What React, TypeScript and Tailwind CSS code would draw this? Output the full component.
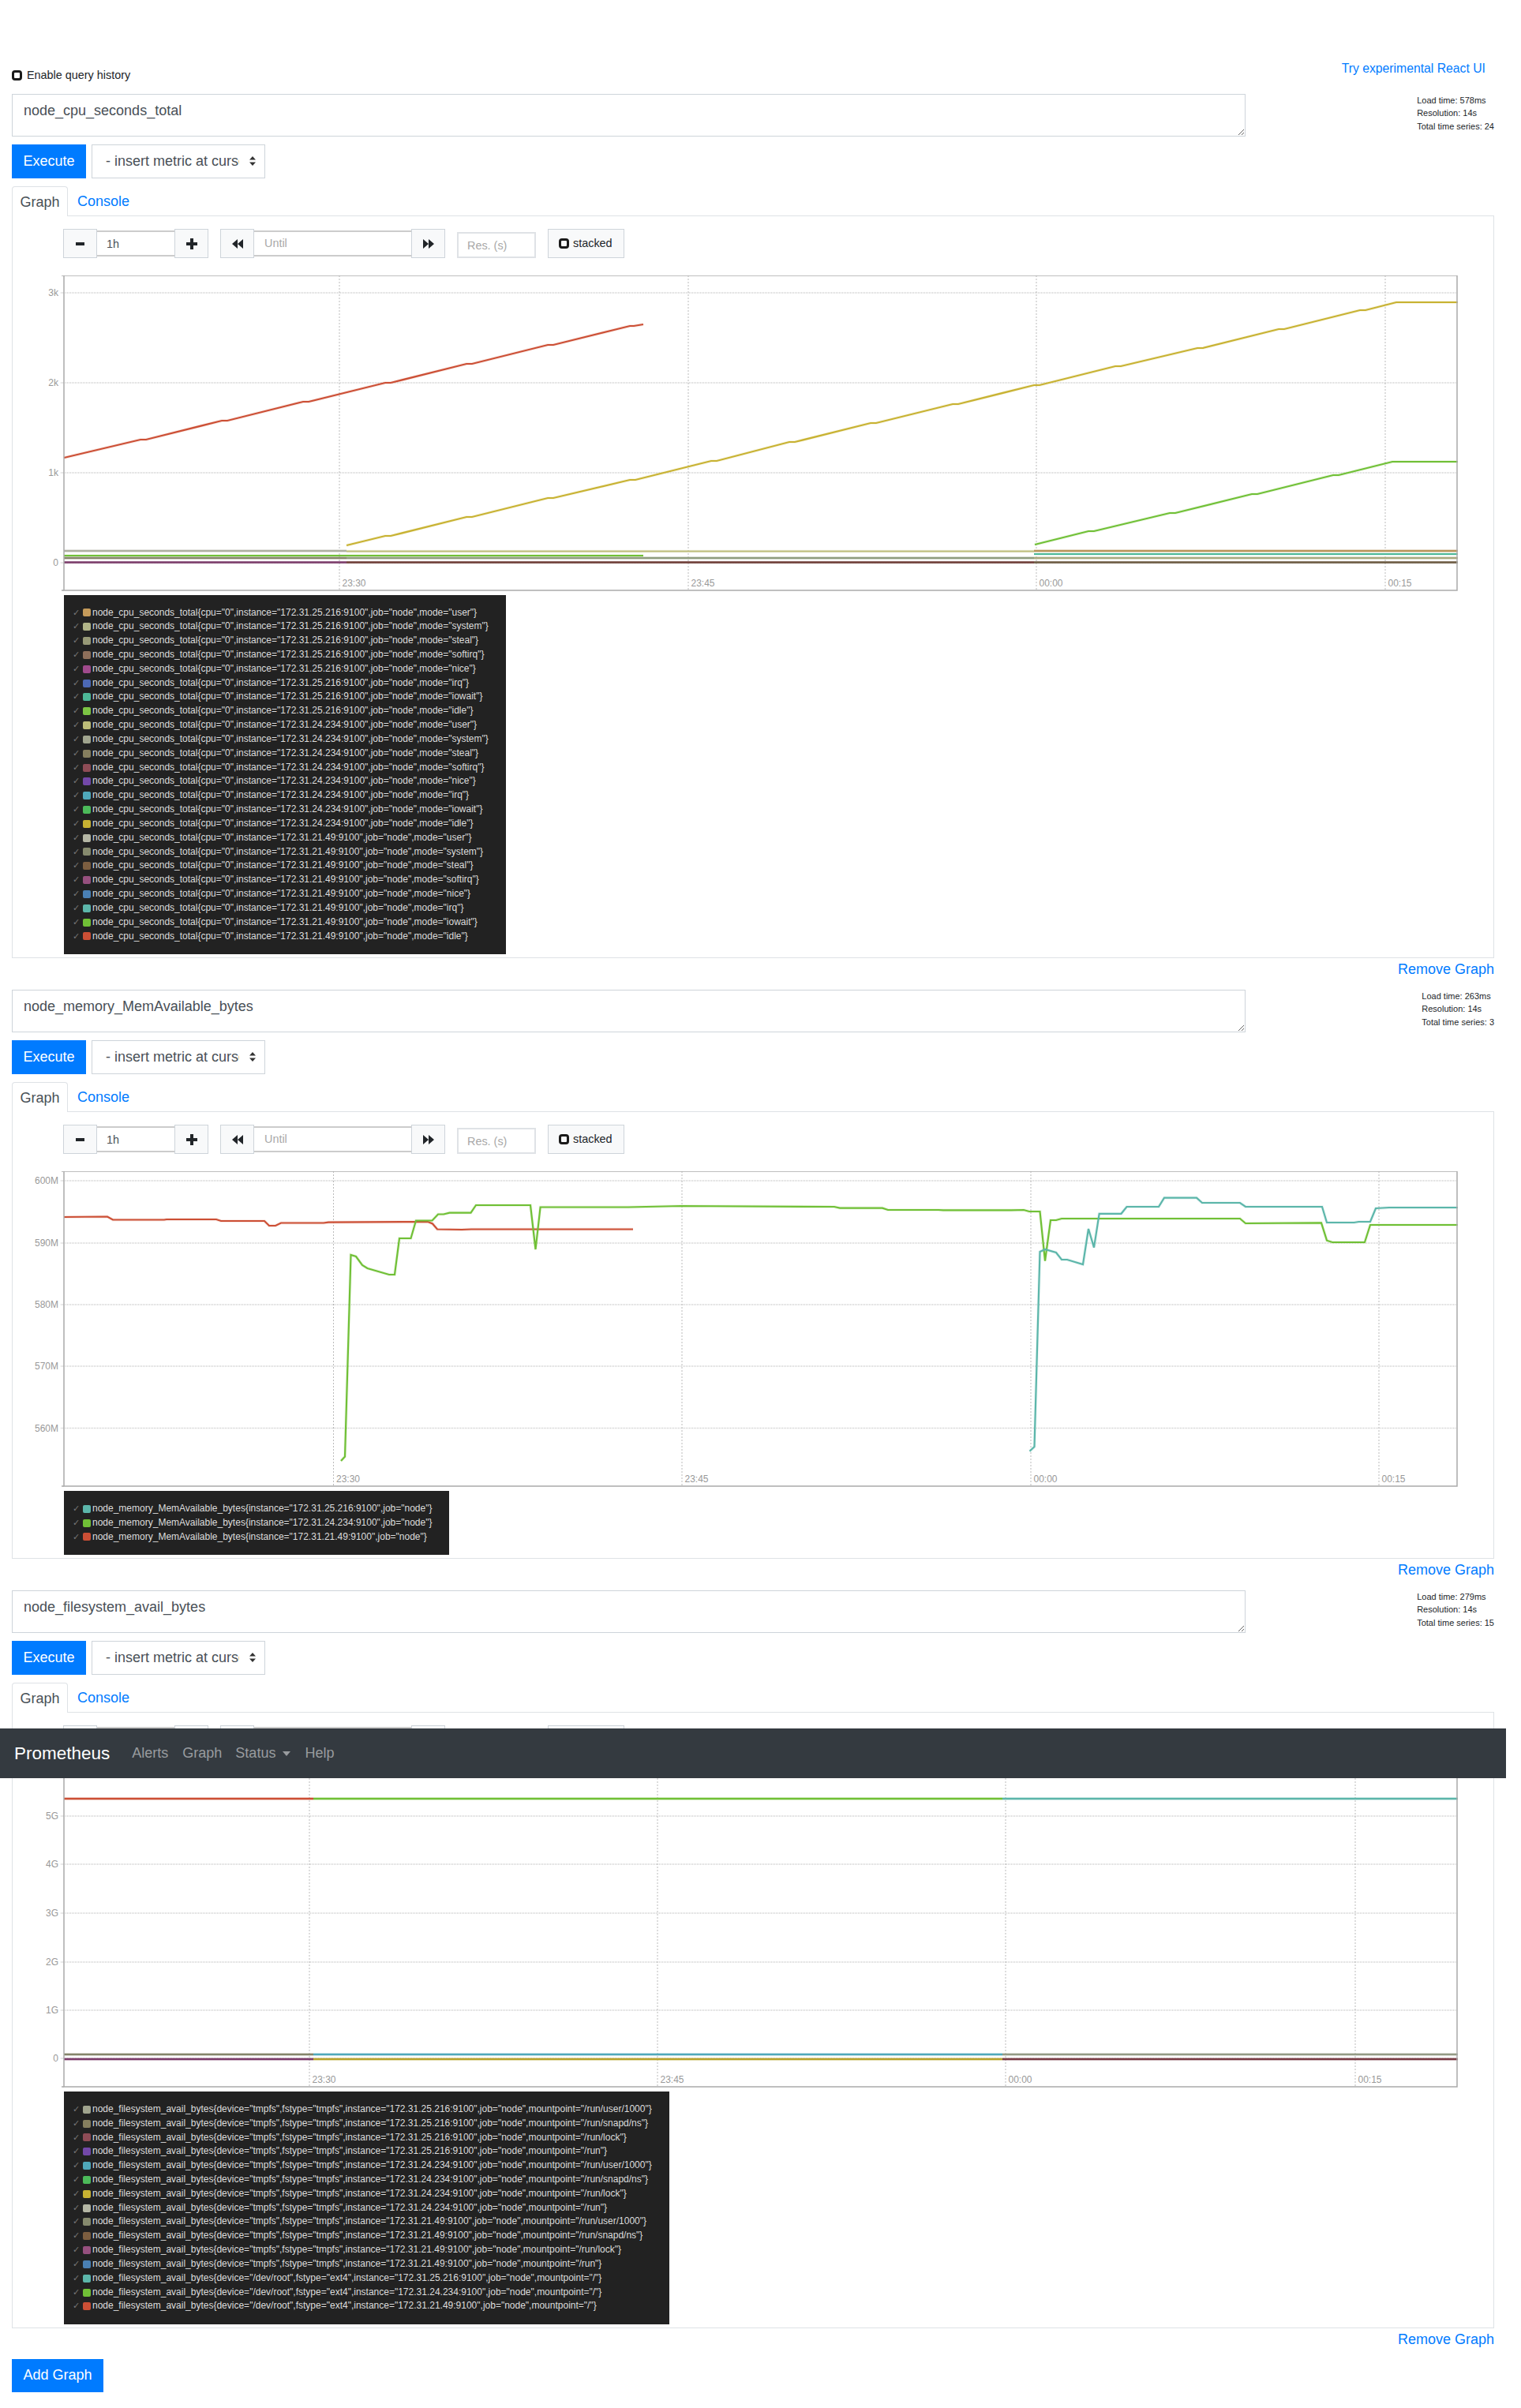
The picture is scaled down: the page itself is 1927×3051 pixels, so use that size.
import { ReactNode } from 'react'

type Series = { color: string; width?: number; points: number[][] }
type ChartData = {
  top: number
  yTicks: { label: string; y: number }[]
  xTicks: { label: string; x: number }[]
  series: Series[]
}
type LegendItem = { color: string; label: string }

const flat = (color: string, y: number, x1: number, x2: number, width = 2): Series => ({
  color,
  width,
  points: [[x1, y], [x2, y]],
})

const cpuLabel = (instance: string, mode: string) =>
  `node_cpu_seconds_total{cpu="0",instance="${instance}:9100",job="node",mode="${mode}"}`

const fsLabel = (device: string, fstype: string, instance: string, mount: string) =>
  `node_filesystem_avail_bytes{device="${device}",fstype="${fstype}",instance="${instance}:9100",job="node",mountpoint="${mount}"}`

const cpuLegend: LegendItem[] = [
  { color: '#c49a5a', label: cpuLabel('172.31.25.216', 'user') },
  { color: '#b0b488', label: cpuLabel('172.31.25.216', 'system') },
  { color: '#979977', label: cpuLabel('172.31.25.216', 'steal') },
  { color: '#8e6f5b', label: cpuLabel('172.31.25.216', 'softirq') },
  { color: '#a04a8c', label: cpuLabel('172.31.25.216', 'nice') },
  { color: '#4c68b4', label: cpuLabel('172.31.25.216', 'irq') },
  { color: '#4db897', label: cpuLabel('172.31.25.216', 'iowait') },
  { color: '#7cc544', label: cpuLabel('172.31.25.216', 'idle') },
  { color: '#bcbc78', label: cpuLabel('172.31.24.234', 'user') },
  { color: '#a0a48e', label: cpuLabel('172.31.24.234', 'system') },
  { color: '#857e5e', label: cpuLabel('172.31.24.234', 'steal') },
  { color: '#8e4c56', label: cpuLabel('172.31.24.234', 'softirq') },
  { color: '#7348a8', label: cpuLabel('172.31.24.234', 'nice') },
  { color: '#4fa8ba', label: cpuLabel('172.31.24.234', 'irq') },
  { color: '#4cba5a', label: cpuLabel('172.31.24.234', 'iowait') },
  { color: '#c8b232', label: cpuLabel('172.31.24.234', 'idle') },
  { color: '#b4b6a4', label: cpuLabel('172.31.21.49', 'user') },
  { color: '#868a6e', label: cpuLabel('172.31.21.49', 'system') },
  { color: '#7c5e40', label: cpuLabel('172.31.21.49', 'steal') },
  { color: '#96507e', label: cpuLabel('172.31.21.49', 'softirq') },
  { color: '#4a80b4', label: cpuLabel('172.31.21.49', 'nice') },
  { color: '#5cb6aa', label: cpuLabel('172.31.21.49', 'irq') },
  { color: '#70c036', label: cpuLabel('172.31.21.49', 'iowait') },
  { color: '#cc4f35', label: cpuLabel('172.31.21.49', 'idle') },
]

const memLegend: LegendItem[] = [
  { color: '#5cb6aa', label: 'node_memory_MemAvailable_bytes{instance="172.31.25.216:9100",job="node"}' },
  { color: '#70c036', label: 'node_memory_MemAvailable_bytes{instance="172.31.24.234:9100",job="node"}' },
  { color: '#cc4f35', label: 'node_memory_MemAvailable_bytes{instance="172.31.21.49:9100",job="node"}' },
]

const fsLegend: LegendItem[] = [
  { color: '#a0a48e', label: fsLabel('tmpfs', 'tmpfs', '172.31.25.216', '/run/user/1000') },
  { color: '#857e5e', label: fsLabel('tmpfs', 'tmpfs', '172.31.25.216', '/run/snapd/ns') },
  { color: '#8e4c56', label: fsLabel('tmpfs', 'tmpfs', '172.31.25.216', '/run/lock') },
  { color: '#7348a8', label: fsLabel('tmpfs', 'tmpfs', '172.31.25.216', '/run') },
  { color: '#4fa8ba', label: fsLabel('tmpfs', 'tmpfs', '172.31.24.234', '/run/user/1000') },
  { color: '#4cba5a', label: fsLabel('tmpfs', 'tmpfs', '172.31.24.234', '/run/snapd/ns') },
  { color: '#c8b232', label: fsLabel('tmpfs', 'tmpfs', '172.31.24.234', '/run/lock') },
  { color: '#b4b6a4', label: fsLabel('tmpfs', 'tmpfs', '172.31.24.234', '/run') },
  { color: '#868a6e', label: fsLabel('tmpfs', 'tmpfs', '172.31.21.49', '/run/user/1000') },
  { color: '#7c5e40', label: fsLabel('tmpfs', 'tmpfs', '172.31.21.49', '/run/snapd/ns') },
  { color: '#96507e', label: fsLabel('tmpfs', 'tmpfs', '172.31.21.49', '/run/lock') },
  { color: '#4a80b4', label: fsLabel('tmpfs', 'tmpfs', '172.31.21.49', '/run') },
  { color: '#5cb6aa', label: fsLabel('/dev/root', 'ext4', '172.31.25.216', '/') },
  { color: '#70c036', label: fsLabel('/dev/root', 'ext4', '172.31.24.234', '/') },
  { color: '#cc4f35', label: fsLabel('/dev/root', 'ext4', '172.31.21.49', '/') },
]

const cpuChart: ChartData = {
  top: 349,
  yTicks: [
    { label: '3k', y: 371 },
    { label: '2k', y: 485 },
    { label: '1k', y: 599 },
    { label: '0', y: 713 },
  ],
  xTicks: [
    { label: '23:30', x: 430 },
    { label: '23:45', x: 872 },
    { label: '00:00', x: 1313 },
    { label: '00:15', x: 1755 },
  ],
  series: [
    flat('#aeb0a0', 698, 81, 439, 2.5),
    flat('#bcbc78', 698.5, 439, 1310),
    flat('#b89458', 698, 1310, 1847, 2.5),
    flat('#70c036', 704, 81, 815),
    flat('#4db897', 702, 1310, 1847),
    flat('#85856a', 707, 81, 439, 2.5),
    flat('#8f9c7e', 707, 439, 1310, 2.5),
    flat('#a9a97e', 707, 1310, 1847, 2.5),
    flat('#7b3b6a', 712.5, 81, 439, 2.5),
    flat('#6e3c36', 712.5, 439, 1310, 2.5),
    flat('#6b5a40', 712.5, 1310, 1847, 2.5),
    {
      color: '#cc4f35',
      points: [
        [81, 580], [178, 557], [185, 557], [281, 533], [288, 533], [384, 509], [391, 509], [488, 485], [495, 485],
        [591, 461], [598, 461], [694, 437], [701, 437], [798, 413], [803, 413], [815, 411],
      ],
    },
    {
      color: '#c8b232',
      points: [
        [439, 691], [488, 679], [495, 679], [591, 655], [598, 655], [694, 631], [701, 631], [798, 608], [805, 608],
        [901, 584], [908, 584], [1000, 560], [1007, 560], [1103, 536], [1110, 536], [1207, 512], [1214, 512],
        [1310, 488], [1317, 488], [1413, 464], [1420, 464], [1517, 441], [1524, 441], [1620, 417], [1627, 417],
        [1723, 393], [1730, 393], [1769, 383], [1847, 383],
      ],
    },
    {
      color: '#70c036',
      points: [
        [1311, 690], [1379, 673], [1386, 673], [1482, 650], [1489, 650], [1586, 626], [1593, 626], [1689, 602],
        [1696, 602], [1764, 585], [1847, 585],
      ],
    },
  ],
}

const memChart: ChartData = {
  top: 1484,
  yTicks: [
    { label: '600M', y: 1496 },
    { label: '590M', y: 1575 },
    { label: '580M', y: 1653 },
    { label: '570M', y: 1731 },
    { label: '560M', y: 1809.5 },
  ],
  xTicks: [
    { label: '23:30', x: 422.5 },
    { label: '23:45', x: 864 },
    { label: '00:00', x: 1306 },
    { label: '00:15', x: 1747 },
  ],
  series: [
    {
      color: '#cc4f35',
      points: [
        [81, 1542], [136, 1541.5], [143, 1545.5], [208, 1545.5], [211, 1545], [274, 1545], [280, 1547], [335, 1547],
        [341, 1553], [349, 1553], [356, 1549.5], [410, 1549.5], [416, 1548.7], [542, 1548], [548, 1550.5],
        [554, 1557.5], [585, 1558], [597, 1557.5], [802, 1557.5],
      ],
    },
    {
      color: '#70c036',
      points: [
        [432, 1851], [437, 1845.5], [444.5, 1590], [451, 1592], [459, 1603], [465.5, 1607], [493, 1615], [500, 1615],
        [506, 1569], [520.5, 1569], [527, 1546.5], [547.5, 1546.5], [555, 1538.5], [562, 1538.5], [569.5, 1536.6],
        [596.5, 1536.6], [603, 1527], [672, 1527], [678.5, 1583], [684.6, 1529.5], [796, 1529.5], [863, 1528],
        [1057, 1529], [1064, 1530.6], [1118, 1530.6], [1125, 1533], [1189, 1533], [1195, 1533.3], [1281, 1533.3],
        [1297, 1533], [1304, 1535], [1317.5, 1535], [1324, 1597.6], [1331, 1546], [1338, 1546], [1345, 1544],
        [1571, 1544], [1578, 1550], [1674, 1549.4], [1681, 1571.7], [1688, 1574], [1729, 1574], [1736, 1552],
        [1847, 1552],
      ],
    },
    {
      color: '#5cb6aa',
      points: [
        [1304.5, 1838.7], [1310.5, 1833], [1317.5, 1586], [1324, 1583], [1338, 1587], [1345, 1596], [1352, 1596],
        [1372, 1602], [1379, 1557], [1386, 1580.6], [1392.7, 1537.8], [1420.5, 1537.8], [1427.5, 1529], [1468, 1529],
        [1475, 1517.7], [1516, 1517.7], [1523, 1524], [1571, 1524], [1578, 1529], [1675, 1529], [1681, 1549],
        [1715.5, 1549], [1721.5, 1548], [1736, 1548], [1743, 1531], [1760, 1530], [1847, 1530],
      ],
    },
  ],
}

const fsChart: ChartData = {
  top: 2246,
  yTicks: [
    { label: '5G', y: 2302 },
    { label: '4G', y: 2363 },
    { label: '3G', y: 2425 },
    { label: '2G', y: 2487 },
    { label: '1G', y: 2548 },
    { label: '0', y: 2609 },
  ],
  xTicks: [
    { label: '23:30', x: 392 },
    { label: '23:45', x: 833 },
    { label: '00:00', x: 1274 },
    { label: '00:15', x: 1717 },
  ],
  series: [
    flat('#cc4f35', 2280, 81, 397, 2.5),
    flat('#70c036', 2280, 397, 1270, 2.5),
    flat('#5cb6aa', 2280, 1270, 1847, 2.5),
    flat('#85856a', 2604, 81, 397, 2.5),
    flat('#4fa8ba', 2604, 397, 1270, 2.5),
    flat('#949a85', 2604, 1270, 1847, 2.5),
    flat('#7b3b6a', 2610, 81, 397, 2.5),
    flat('#b8a32c', 2610, 397, 1270, 2.5),
    flat('#7a3b44', 2610, 1270, 1847, 2.5),
  ],
}

function Chart({ data }: { data: ChartData }) {
  const { top } = data
  const bottom = top + 399
  return (
    <svg width={1876} height={405} viewBox={`16 ${top} 1876 405`} className="block font-['Liberation_Sans',sans-serif]">
      {data.yTicks.map((t) => (
        <g key={t.label}>
          <line x1={77} x2={1846} y1={t.y} y2={t.y} stroke="#ccc" strokeWidth={1.5} strokeDasharray="1 1" />
          <text x={74} y={t.y + 4} textAnchor="end" fontSize={12} fill="#999">
            {t.label}
          </text>
        </g>
      ))}
      {data.xTicks.map((t) => (
        <g key={t.label}>
          <line x1={t.x} x2={t.x} y1={top} y2={bottom} stroke="#bbb" strokeWidth={1} strokeDasharray="2 2" />
          <text x={t.x + 3.5} y={top + 394} fontSize={12} fill="#999">
            {t.label}
          </text>
        </g>
      ))}
      {data.series.map((s, i) => {
        const pts = s.points.map((p) => p.join(',')).join(' ')
        return (
          <g key={i} fill="none" stroke={s.color}>
            <polyline points={pts} strokeWidth={4} strokeOpacity={0.12} />
            <polyline points={pts} strokeWidth={s.width ?? 2.2} />
          </g>
        )
      })}
      <rect x={81} y={top} width={1765} height={399} fill="none" stroke="#aaa" strokeWidth={1.5} />
      <path d={`M78 ${top}H81M78 ${bottom}H81`} stroke="#aaa" strokeWidth={1.5} />
    </svg>
  )
}

function Legend({ items }: { items: LegendItem[] }) {
  return (
    <div className="ml-[65px] w-fit bg-[#222222] pl-[11px] pr-[22px] py-[13.5px] text-[12px] leading-[17.84px] text-[#dddddd]">
      {items.map((item) => (
        <div key={item.label} className="flex h-[17.84px] items-center whitespace-nowrap">
          <span className="w-[13px] text-[11px] text-[#777777]">✓</span>
          <span className="mr-[2px] h-[10px] w-[10px] rounded-[2px]" style={{ background: item.color }} />
          {item.label}
        </div>
      ))}
    </div>
  )
}

function CtlButton({ children }: { children: ReactNode }) {
  return (
    <button className="flex h-[37px] w-[43px] items-center justify-center border border-[#ced4da] bg-[#f8f9fa] text-[#212529]">
      {children}
    </button>
  )
}

function Box() {
  return <span className="inline-block h-[13px] w-[13px] rounded-[4px] border-[3px] border-[#1a1a1a]" />
}

function Controls() {
  return (
    <div className="ml-[64px] flex gap-[15px] text-[14.4px]">
      <div className="flex items-center">
        <CtlButton>
          <svg width="11" height="4" viewBox="0 0 11 4">
            <rect width="11" height="4" fill="#212529" />
          </svg>
        </CtlButton>
        <input
          defaultValue="1h"
          className="h-[33px] w-[98px] border-y-2 border-[#cccccc] bg-white px-[12px] text-[#495057] outline-none"
        />
        <CtlButton>
          <svg width="14" height="14" viewBox="0 0 14 14">
            <path d="M5 0h4v5h5v4H9v5H5V9H0V5h5z" fill="#212529" />
          </svg>
        </CtlButton>
      </div>
      <div className="flex items-center">
        <CtlButton>
          <svg width="14" height="12" viewBox="0 0 14 12">
            <path d="M7 0v12L0 6zM14 0v12L7 6z" fill="#212529" />
          </svg>
        </CtlButton>
        <input
          placeholder="Until"
          className="-mt-[1px] h-[33px] w-[199px] border-y-2 border-[#cccccc] bg-white pl-[13px] pr-[12px] outline-none placeholder:text-[#a8a8a8]"
        />
        <CtlButton>
          <svg width="14" height="12" viewBox="0 0 14 12">
            <path d="M0 0v12l7-6zM7 0v12l7-6z" fill="#212529" />
          </svg>
        </CtlButton>
      </div>
      <input
        placeholder="Res. (s)"
        className="mt-[4px] h-[33px] w-[100px] border-2 border-[#dfe2e6] bg-white px-[11px] outline-none placeholder:text-[#a8a8a8]"
      />
      <button className="flex h-[37px] w-[97px] items-center border border-[#ced4da] bg-[#f8f9fa] pl-[13px] text-[#212529]">
        <Box />
        <span className="ml-[5px]">stacked</span>
      </button>
    </div>
  )
}

function GraphSection({
  query,
  stats,
  chart,
  legend,
}: {
  query: string
  stats: string[]
  chart: ChartData
  legend: LegendItem[]
}) {
  return (
    <section>
      <div className="flex justify-between">
        <textarea
          defaultValue={query}
          className="h-[54.5px] w-[1563px] border border-[#ced4da] px-[14px] py-[7.5px] text-[#495057] outline-none"
        />
        <div className="text-[11px] leading-[16.5px] text-[#212529]">
          {stats.map((s) => (
            <div key={s} className="whitespace-nowrap">
              {s}
            </div>
          ))}
        </div>
      </div>
      <div className="mt-[10px] flex gap-[7px]">
        <button className="h-[43px] w-[94px] bg-[#007bff] text-white">Execute</button>
        <div className="relative h-[43px] w-[220px]">
          <select className="h-full w-full appearance-none border border-[#ced4da] bg-white pl-[17px] pr-[32px] text-[#495057] outline-none">
            <option>- insert metric at cursor -</option>
          </select>
          <svg className="absolute right-[12px] top-[15px]" width="8" height="12" viewBox="0 0 8 12">
            <path d="M4 0l4 4.5H0zM4 12l4-4.5H0z" fill="#333" />
          </svg>
        </div>
      </div>
      <div className="mt-[10px] flex h-[38px] border-b border-[#dee2e6] leading-[38px]">
        <span className="-mb-px h-[38px] w-[71px] rounded-t-[4px] border border-b-0 border-[#dee2e6] bg-white text-center text-[#495057]">
          Graph
        </span>
        <a className="ml-[12px] text-[#007bff]">Console</a>
      </div>
      <div className="border-x border-b border-[#dee2e6] pb-[4px] pt-[16px]">
        <Controls />
        <div className="mt-[22px]">
          <Chart data={chart} />
        </div>
        <Legend items={legend} />
      </div>
      <div className="h-[40px] text-right leading-[28px]">
        <a className="text-[#007bff]">Remove Graph</a>
      </div>
    </section>
  )
}

export default function App() {
  return (
    <div className="relative w-[1927px] bg-white font-['Liberation_Sans',Arial,sans-serif] text-[18px] text-[#212529]">
      <nav className="absolute left-0 top-[2190px] z-10 flex h-[63px] w-[1908px] items-center bg-[#343a40] pl-[18px]">
        <span className="text-[22.5px] text-white">Prometheus</span>
        <div className="ml-[28px] flex items-center text-[#999c9f]">
          <a>Alerts</a>
          <a className="ml-[18px]">Graph</a>
          <a className="ml-[17px]">Status</a>
          <span className="ml-[9px] h-0 w-0 border-x-[5px] border-t-[6px] border-x-transparent border-t-[#999c9f]" />
          <a className="ml-[18px]">Help</a>
        </div>
      </nav>

      <div className="w-[1908px] px-[15px] pb-[19px]">
        <div className="flex h-[118.5px] items-start justify-between">
          <label className="mt-[83px] flex items-center text-[14.4px] leading-[24px]">
            <Box />
            <span className="ml-[6px]">Enable query history</span>
          </label>
          <a className="mr-[11px] mt-[75px] text-[15.75px] leading-[24px] text-[#007bff]">Try experimental React UI</a>
        </div>

        <GraphSection
          query="node_cpu_seconds_total"
          stats={['Load time: 578ms', 'Resolution: 14s', 'Total time series: 24']}
          chart={cpuChart}
          legend={cpuLegend}
        />
        <GraphSection
          query="node_memory_MemAvailable_bytes"
          stats={['Load time: 263ms', 'Resolution: 14s', 'Total time series: 3']}
          chart={memChart}
          legend={memLegend}
        />
        <GraphSection
          query="node_filesystem_avail_bytes"
          stats={['Load time: 279ms', 'Resolution: 14s', 'Total time series: 15']}
          chart={fsChart}
          legend={fsLegend}
        />

        <button className="-mt-[1px] block h-[42px] w-[116px] bg-[#007bff] text-white">Add Graph</button>
      </div>
    </div>
  )
}
